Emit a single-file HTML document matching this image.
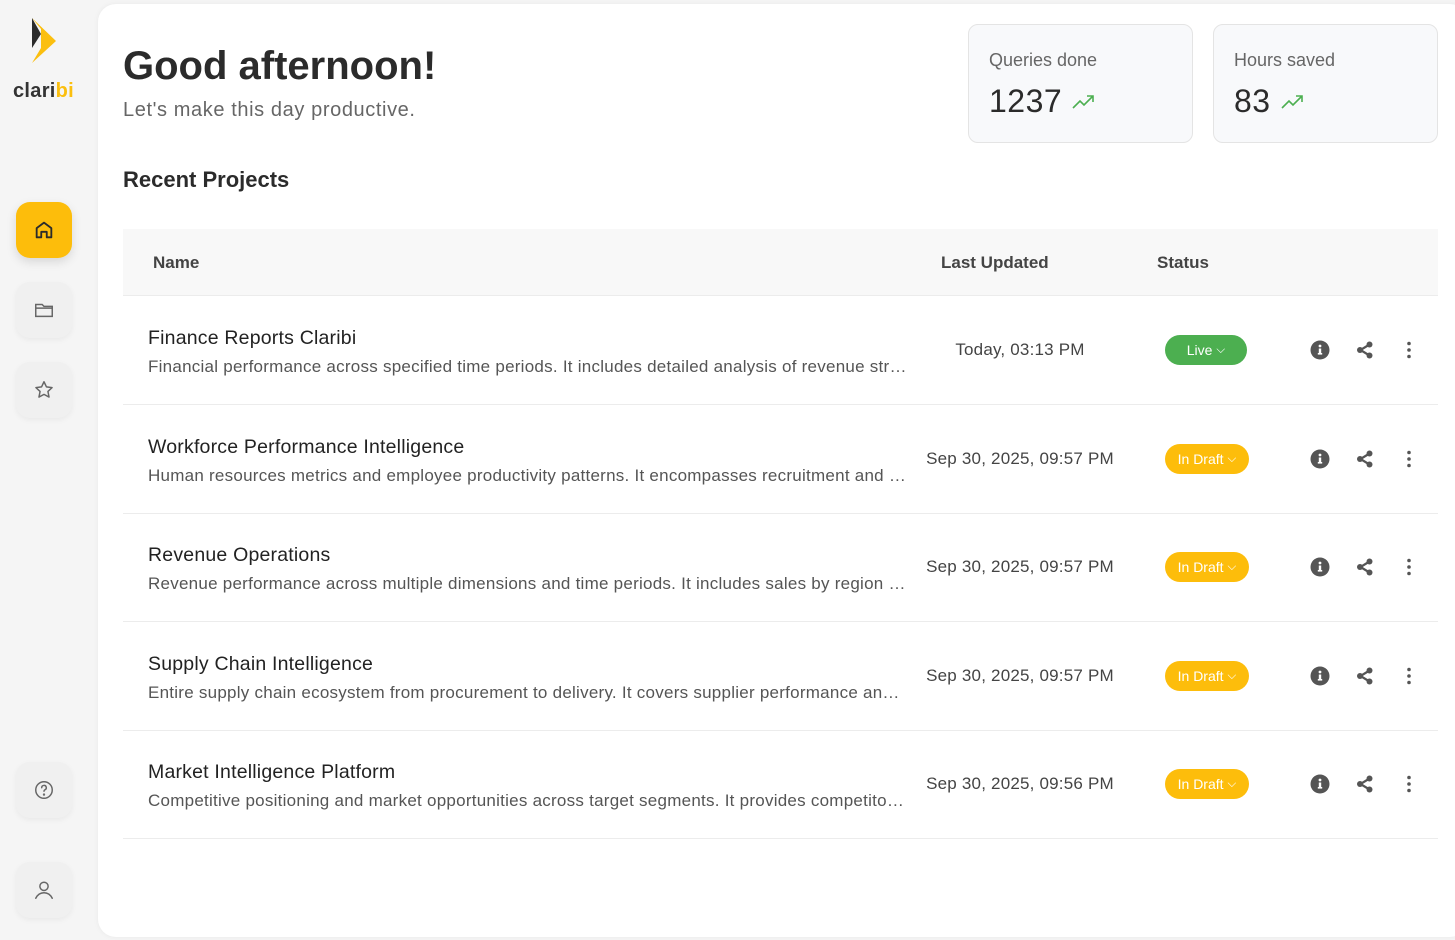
<!DOCTYPE html>
<html><head><meta charset="utf-8"><style>
*{margin:0;padding:0;box-sizing:border-box}
body{width:1455px;height:940px;background:#f5f5f5;font-family:"Liberation Sans",sans-serif;position:relative;overflow:hidden;color:#2b2b2b}
.a{position:absolute}
.main{left:98px;top:4px;width:1370px;height:933px;background:#fff;border-radius:18px;box-shadow:0 0 6px rgba(0,0,0,.05)}
.nav{left:16px;width:56px;height:56px;border-radius:14px;background:#f0f0f0;display:flex;align-items:center;justify-content:center;box-shadow:0 2px 6px rgba(0,0,0,.05)}
.card{top:24px;width:225px;height:119px;background:#f8f9fb;border:1px solid #e4e4e4;border-radius:10px}
.card .l{position:absolute;left:20px;top:25px;font-size:18px;color:#666}
.card .v{position:absolute;left:20px;top:58px;font-size:32px;color:#2b2b2b;display:flex;align-items:center;gap:10px;letter-spacing:.5px}
.hdr{left:123px;top:229px;width:1315px;height:67px;background:#f8f8f8;border-bottom:1px solid #ececec}
.th{top:253px;font-size:17px;font-weight:bold;color:#444}
.row{left:123px;width:1315px;height:109px;border-bottom:1px solid #ececec}
.t{position:absolute;left:25px;top:31px;font-size:19.5px;color:#222;letter-spacing:.2px}
.d{position:absolute;left:25px;top:61px;font-size:17px;color:#555;width:760px;white-space:nowrap;overflow:hidden;text-overflow:ellipsis;letter-spacing:.25px}
.dt{position:absolute;left:780px;width:234px;top:44px;font-size:17px;color:#444;text-align:center;letter-spacing:.2px}
.st{position:absolute;left:1042px;top:39px;height:30px;border-radius:15px;color:#fff;font-size:14px;display:flex;align-items:center;justify-content:center;gap:4px}
.ic{position:absolute;top:44px}
</style></head><body>
<svg class="a" style="left:30px;top:17px" width="26" height="48" viewBox="0 0 26 48"><polygon points="2,1 11,12 11,31 2,46 26,24" fill="#fbbf0f"/><polygon points="2,1 11,17 2,31" fill="#2b2b2b"/></svg>
<div class="a" style="left:13px;top:80px;font-size:20px;font-weight:bold;color:#333;letter-spacing:.3px">clari<span style="color:#fbbf0f">bi</span></div>
<div class="a nav" style="top:202px;background:#fdbd0b;box-shadow:0 4px 10px rgba(0,0,0,.12)"><svg width="22" height="22" viewBox="0 0 24 24" fill="none" stroke="#2b2b2b" stroke-width="2" stroke-linejoin="round"><path d="M4 10l8-6 8 6v10h-5v-6h-6v6H4z"/></svg></div>
<div class="a nav" style="top:282px"><svg width="22" height="22" viewBox="0 0 24 24" fill="none" stroke="#666" stroke-width="1.6"><path d="M3 6h7l2 2h9v11H3z"/><path d="M3 10h18"/></svg></div>
<div class="a nav" style="top:362px"><svg width="22" height="22" viewBox="0 0 24 24" fill="none" stroke="#666" stroke-width="1.6" stroke-linejoin="round"><path d="M12 3l2.7 5.6 6.1.8-4.5 4.2 1.2 6.1L12 16.8 6.5 19.7l1.2-6.1L3.2 9.4l6.1-.8z"/></svg></div>
<div class="a nav" style="top:762px"><svg width="22" height="22" viewBox="0 0 24 24" fill="none" stroke="#666" stroke-width="1.6" stroke-linecap="round"><circle cx="12" cy="12" r="9"/><path d="M9.5 9.5a2.5 2.5 0 1 1 3.5 2.3c-.7.3-1 .9-1 1.6"/><circle cx="12" cy="17" r=".5" fill="#666"/></svg></div>
<div class="a nav" style="top:862px"><svg width="22" height="22" viewBox="0 0 24 24" fill="none" stroke="#666" stroke-width="1.6" stroke-linecap="round"><circle cx="12" cy="8" r="4.5"/><path d="M3 21c2-4 5-6 9-6s7 2 9 6"/></svg></div>

<div class="a main"></div>
<div class="a" style="left:123px;top:44px;font-size:40px;font-weight:bold;color:#2b2b2b">Good afternoon!</div>
<div class="a" style="left:123px;top:99px;font-size:20px;color:#666;letter-spacing:.6px">Let's make this day productive.</div>
<div class="a" style="left:123px;top:167px;font-size:22px;font-weight:bold;color:#2b2b2b">Recent Projects</div>

<div class="a card" style="left:968px"><div class="l">Queries done</div><div class="v">1237<svg width="24" height="16" viewBox="0 0 24 16" fill="none" stroke="#4caf50" stroke-width="1.6"><path d="M1 14l7-7 4 4 9-9M15 2h6v6"/></svg></div></div>
<div class="a card" style="left:1213px"><div class="l">Hours saved</div><div class="v">83<svg width="24" height="16" viewBox="0 0 24 16" fill="none" stroke="#4caf50" stroke-width="1.6"><path d="M1 14l7-7 4 4 9-9M15 2h6v6"/></svg></div></div>

<div class="a hdr"></div>
<div class="a th" style="left:153px">Name</div>
<div class="a th" style="left:941px">Last Updated</div>
<div class="a th" style="left:1157px">Status</div>

<div class="a row" style="top:296px"><div class="t">Finance Reports Claribi</div><div class="d">Financial performance across specified time periods. It includes detailed analysis of revenue streams and expenses</div><div class="dt">Today, 03:13 PM</div><div class="st" style="width:82px;background:#4caf50">Live <small>⌵</small></div>
<svg class="ic" style="left:1187px" width="20" height="20" viewBox="0 0 20 20"><circle cx="10" cy="10" r="9.5" fill="#555"/><rect x="8.8" y="8.5" width="2.4" height="6" fill="#fff"/><rect x="7.8" y="13" width="4.4" height="1.6" fill="#fff"/><circle cx="10" cy="6" r="1.4" fill="#fff"/></svg>
<svg class="ic" style="left:1232px" width="20" height="20" viewBox="0 0 20 20"><path d="M14.5 4.5L5.5 10l9 5.5" stroke="#555" stroke-width="2.2" fill="none"/><circle cx="14.5" cy="4.5" r="3" fill="#555"/><circle cx="5" cy="10" r="3" fill="#555"/><circle cx="14.5" cy="15.5" r="3" fill="#555"/></svg>
<svg class="ic" style="left:1276px" width="20" height="20" viewBox="0 0 20 20"><circle cx="10" cy="3.5" r="1.8" fill="#555"/><circle cx="10" cy="10" r="1.8" fill="#555"/><circle cx="10" cy="16.5" r="1.8" fill="#555"/></svg></div>

<div class="a row" style="top:405px"><div class="t">Workforce Performance Intelligence</div><div class="d">Human resources metrics and employee productivity patterns. It encompasses recruitment and retention data</div><div class="dt">Sep 30, 2025, 09:57 PM</div><div class="st" style="width:84px;background:#fdbd0b">In Draft <small>⌵</small></div>
<svg class="ic" style="left:1187px" width="20" height="20" viewBox="0 0 20 20"><circle cx="10" cy="10" r="9.5" fill="#555"/><rect x="8.8" y="8.5" width="2.4" height="6" fill="#fff"/><rect x="7.8" y="13" width="4.4" height="1.6" fill="#fff"/><circle cx="10" cy="6" r="1.4" fill="#fff"/></svg>
<svg class="ic" style="left:1232px" width="20" height="20" viewBox="0 0 20 20"><path d="M14.5 4.5L5.5 10l9 5.5" stroke="#555" stroke-width="2.2" fill="none"/><circle cx="14.5" cy="4.5" r="3" fill="#555"/><circle cx="5" cy="10" r="3" fill="#555"/><circle cx="14.5" cy="15.5" r="3" fill="#555"/></svg>
<svg class="ic" style="left:1276px" width="20" height="20" viewBox="0 0 20 20"><circle cx="10" cy="3.5" r="1.8" fill="#555"/><circle cx="10" cy="10" r="1.8" fill="#555"/><circle cx="10" cy="16.5" r="1.8" fill="#555"/></svg></div>

<div class="a row" style="top:513px"><div class="t">Revenue Operations</div><div class="d">Revenue performance across multiple dimensions and time periods. It includes sales by region and product line</div><div class="dt">Sep 30, 2025, 09:57 PM</div><div class="st" style="width:84px;background:#fdbd0b">In Draft <small>⌵</small></div>
<svg class="ic" style="left:1187px" width="20" height="20" viewBox="0 0 20 20"><circle cx="10" cy="10" r="9.5" fill="#555"/><rect x="8.8" y="8.5" width="2.4" height="6" fill="#fff"/><rect x="7.8" y="13" width="4.4" height="1.6" fill="#fff"/><circle cx="10" cy="6" r="1.4" fill="#fff"/></svg>
<svg class="ic" style="left:1232px" width="20" height="20" viewBox="0 0 20 20"><path d="M14.5 4.5L5.5 10l9 5.5" stroke="#555" stroke-width="2.2" fill="none"/><circle cx="14.5" cy="4.5" r="3" fill="#555"/><circle cx="5" cy="10" r="3" fill="#555"/><circle cx="14.5" cy="15.5" r="3" fill="#555"/></svg>
<svg class="ic" style="left:1276px" width="20" height="20" viewBox="0 0 20 20"><circle cx="10" cy="3.5" r="1.8" fill="#555"/><circle cx="10" cy="10" r="1.8" fill="#555"/><circle cx="10" cy="16.5" r="1.8" fill="#555"/></svg></div>

<div class="a row" style="top:622px"><div class="t">Supply Chain Intelligence</div><div class="d">Entire supply chain ecosystem from procurement to delivery. It covers supplier performance and logistics</div><div class="dt">Sep 30, 2025, 09:57 PM</div><div class="st" style="width:84px;background:#fdbd0b">In Draft <small>⌵</small></div>
<svg class="ic" style="left:1187px" width="20" height="20" viewBox="0 0 20 20"><circle cx="10" cy="10" r="9.5" fill="#555"/><rect x="8.8" y="8.5" width="2.4" height="6" fill="#fff"/><rect x="7.8" y="13" width="4.4" height="1.6" fill="#fff"/><circle cx="10" cy="6" r="1.4" fill="#fff"/></svg>
<svg class="ic" style="left:1232px" width="20" height="20" viewBox="0 0 20 20"><path d="M14.5 4.5L5.5 10l9 5.5" stroke="#555" stroke-width="2.2" fill="none"/><circle cx="14.5" cy="4.5" r="3" fill="#555"/><circle cx="5" cy="10" r="3" fill="#555"/><circle cx="14.5" cy="15.5" r="3" fill="#555"/></svg>
<svg class="ic" style="left:1276px" width="20" height="20" viewBox="0 0 20 20"><circle cx="10" cy="3.5" r="1.8" fill="#555"/><circle cx="10" cy="10" r="1.8" fill="#555"/><circle cx="10" cy="16.5" r="1.8" fill="#555"/></svg></div>

<div class="a row" style="top:730px"><div class="t">Market Intelligence Platform</div><div class="d">Competitive positioning and market opportunities across target segments. It provides competitor benchmarks</div><div class="dt">Sep 30, 2025, 09:56 PM</div><div class="st" style="width:84px;background:#fdbd0b">In Draft <small>⌵</small></div>
<svg class="ic" style="left:1187px" width="20" height="20" viewBox="0 0 20 20"><circle cx="10" cy="10" r="9.5" fill="#555"/><rect x="8.8" y="8.5" width="2.4" height="6" fill="#fff"/><rect x="7.8" y="13" width="4.4" height="1.6" fill="#fff"/><circle cx="10" cy="6" r="1.4" fill="#fff"/></svg>
<svg class="ic" style="left:1232px" width="20" height="20" viewBox="0 0 20 20"><path d="M14.5 4.5L5.5 10l9 5.5" stroke="#555" stroke-width="2.2" fill="none"/><circle cx="14.5" cy="4.5" r="3" fill="#555"/><circle cx="5" cy="10" r="3" fill="#555"/><circle cx="14.5" cy="15.5" r="3" fill="#555"/></svg>
<svg class="ic" style="left:1276px" width="20" height="20" viewBox="0 0 20 20"><circle cx="10" cy="3.5" r="1.8" fill="#555"/><circle cx="10" cy="10" r="1.8" fill="#555"/><circle cx="10" cy="16.5" r="1.8" fill="#555"/></svg></div>
</body></html>
